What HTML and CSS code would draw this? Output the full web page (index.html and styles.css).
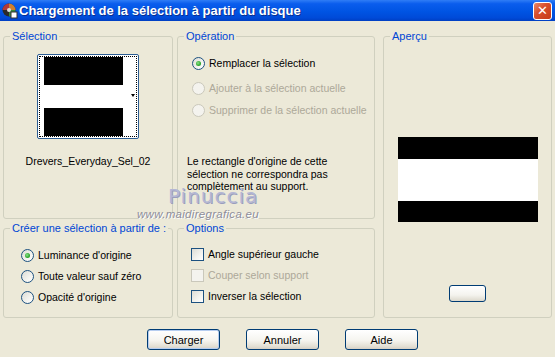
FILE: index.html
```html
<!DOCTYPE html>
<html lang="fr">
<head>
  <meta charset="UTF-8" />
  <title>Chargement de la sélection à partir du disque</title>
  <link rel="stylesheet" href="styles.css">
</head>
<body>
  <div class="window">
    <div class="titlebar">
      <svg class="app-icon" width="16" height="16" viewBox="0 0 16 16">
        <circle cx="7" cy="7" r="6.5" fill="#2a2a2a"/>
        <path d="M7 7 L7 0.5 A6.5 6.5 0 0 1 13.5 7 Z" fill="#d08030"/>
        <path d="M7 7 L13.5 7 A6.5 6.5 0 0 1 7 13.5 Z" fill="#3a8a3a"/>
        <path d="M7 7 L0.5 7 A6.5 6.5 0 0 1 7 0.5 Z" fill="#b03a3a"/>
        <circle cx="7" cy="7" r="2" fill="#ddd"/>
        <rect x="9" y="9" width="6" height="6" fill="#fff" stroke="#333"/>
      </svg>
      <span class="title">Chargement de la sélection à partir du disque</span>
      <button class="close-btn">&#x2715;</button>
    </div>

    <div class="dialog">
      <div class="panes">
        <fieldset class="group sel">
          <legend>Sélection</legend>
          <div class="picker">
            <div class="focus">
              <div class="sel-img">
                <div class="bar"></div>
                <div class="gap"></div>
                <div class="bar"></div>
              </div>
              <div class="drop"><span class="arrow"></span></div>
            </div>
          </div>
          <div class="filename">Drevers_Everyday_Sel_02</div>
        </fieldset>

        <fieldset class="group op">
          <legend>Opération</legend>
          <div class="opt r1"><span class="radio checked"></span>Remplacer la sélection</div>
          <div class="opt r2 disabled"><span class="radio"></span>Ajouter à la sélection actuelle</div>
          <div class="opt r3 disabled"><span class="radio"></span>Supprimer de la sélection actuelle</div>
          <p class="note">Le rectangle d'origine de cette sélection ne correspondra pas complètement au support.</p>
        </fieldset>

        <fieldset class="group preview">
          <legend>Aperçu</legend>
          <div class="preview-img">
            <div class="bar top"></div>
            <div class="gap"></div>
            <div class="bar bottom"></div>
          </div>
          <button class="small-btn"></button>
        </fieldset>

        <fieldset class="group src">
          <legend>Créer une sélection à partir de :</legend>
          <div class="opt"><span class="radio checked"></span>Luminance d'origine</div>
          <div class="opt"><span class="radio"></span>Toute valeur sauf zéro</div>
          <div class="opt"><span class="radio"></span>Opacité d'origine</div>
        </fieldset>

        <fieldset class="group opts">
          <legend>Options</legend>
          <div class="opt"><span class="check"></span>Angle supérieur gauche</div>
          <div class="opt disabled"><span class="check"></span>Couper selon support</div>
          <div class="opt"><span class="check"></span>Inverser la sélection</div>
        </fieldset>
      </div>

      <div class="buttons">
        <button class="btn default">Charger</button>
        <button class="btn">Annuler</button>
        <button class="btn">Aide</button>
      </div>

      <div class="watermark">
        <div class="wm-name">Pinuccia</div>
        <div class="wm-url">www.maidiregrafica.eu</div>
      </div>
    </div>
  </div>
</body>
</html>
```

FILE: styles.css
```css
:root {
  --dialog-bg: #ece9d8;
  --group-border: #d0d0bf;
  --legend: #0046d5;
  --disabled: #aca899;
  --control-border: #1c5180;
}

body {
  margin: 0;
  width: 555px;
  height: 357px;
  overflow: hidden;
  background-color: var(--dialog-bg);
  font-family: 'Liberation Sans', Arial, sans-serif;
  font-size: 10.5px;
  color: #000;
}

.window {
  height: 357px;
  display: flex;
  flex-direction: column;
}

.titlebar {
  height: 21px;
  display: flex;
  align-items: center;
  padding: 0 3px 0 2px;
  background: linear-gradient(#2f7df6 0%, #0a5ded 18%, #0054e3 55%, #004ad8 85%, #003fc2 100%);
  color: #fff;
}

.app-icon {
  flex: none;
  margin-right: 1px;
}

.title {
  flex: 1;
  font-weight: bold;
  font-size: 13px;
  text-shadow: 1px 1px 0 #0a2e90;
  white-space: nowrap;
}

.close-btn {
  width: 19px;
  height: 18px;
  padding: 0;
  border: 1px solid #fff;
  border-radius: 3px;
  background: linear-gradient(135deg, #e88a6a 0%, #d9502e 40%, #c63a14 100%);
  color: #fff;
  font-size: 13px;
  font-weight: bold;
  line-height: 16px;
  font-family: 'DejaVu Sans', sans-serif;
}

.dialog {
  position: relative;
  flex: 1;
  padding: 9px 3px 0 3px;
}

.panes {
  display: grid;
  grid-template-columns: 170px 198px 173px;
  grid-template-rows: 189px 96px;
  column-gap: 4px;
  row-gap: 3px;
}

.group {
  margin: 0;
  padding: 0;
  min-width: 0;
  border: 1px solid var(--group-border);
  border-radius: 3px;
}

.group legend {
  margin-left: 6px;
  padding: 0 2px;
  color: var(--legend);
  font-size: 11px;
  line-height: 13px;
  white-space: nowrap;
}

.preview {
  grid-column: 3;
  grid-row: 1 / span 2;
  margin-left: 4px;
  display: flex;
  flex-direction: column;
  align-items: center;
}

.src { grid-column: 1; grid-row: 2; }
.opts { grid-column: 2; grid-row: 2; }

/* selection picker */
.picker {
  width: 98px;
  margin: 11px auto 0;
  padding: 1px;
  border: 1px solid #2c5d92;
  border-radius: 2px;
  background: #fff;
}

.focus {
  display: flex;
  border: 1px dotted #000;
  padding-left: 4px;
}

.sel-img {
  width: 79px;
}

.sel-img .bar { height: 28px; background: #000; }
.sel-img .gap { height: 23px; background: #fff; }

.drop {
  flex: 1;
  display: flex;
  align-items: center;
  justify-content: flex-end;
  padding-right: 1px;
}

.arrow {
  width: 0;
  height: 0;
  margin-bottom: 2px;
  border-left: 2.5px solid transparent;
  border-right: 2.5px solid transparent;
  border-top: 3px solid #000;
}

.filename {
  margin-top: 16px;
  text-align: center;
  line-height: 13px;
}

/* radios and checkboxes */
.opt {
  display: flex;
  align-items: center;
  height: 13px;
  line-height: 13px;
  white-space: nowrap;
}

.src .opt { margin-left: 17px; }
.src .opt:first-of-type { margin-top: 14px; }
.opts .opt { margin-left: 13px; }
.opts .opt:first-of-type { margin-top: 13px; }
.src .opt + .opt,
.opts .opt + .opt { margin-top: 8px; }

.op .opt { margin-left: 14px; }
.op .r1 { margin-top: 14px; }
.op .r2 { margin-top: 12px; }
.op .r3 { margin-top: 9px; }

.opt.disabled { color: var(--disabled); }

.radio {
  position: relative;
  flex: none;
  width: 11px;
  height: 11px;
  margin-right: 4px;
  border: 1px solid var(--control-border);
  border-radius: 50%;
  background: linear-gradient(135deg, #dcdcd5 0%, #f3f3ef 60%, #fff 100%);
}

.radio.checked::after {
  content: '';
  position: absolute;
  left: 3px;
  top: 3px;
  width: 5px;
  height: 5px;
  border-radius: 50%;
  background: radial-gradient(circle at 40% 40%, #8be08b 0%, #2ea82e 60%, #1d861d 100%);
}

.check {
  flex: none;
  width: 11px;
  height: 11px;
  margin-right: 4px;
  border: 1px solid var(--control-border);
  background: linear-gradient(135deg, #dcdcd5 0%, #f3f3ef 60%, #fff 100%);
}

.opt.disabled .radio,
.opt.disabled .check {
  border-color: #cac8bb;
  background: #f4f3ee;
}

.note {
  margin: 38px 0 0 9px;
  line-height: 12.5px;
  width: 160px;
}

/* preview */
.preview-img {
  width: 140px;
  margin-top: 94px;
}

.preview-img .bar.top { height: 22px; background: #000; }
.preview-img .gap { height: 42px; background: #fff; }
.preview-img .bar.bottom { height: 21px; background: #000; }

.small-btn {
  width: 37px;
  height: 17px;
  margin-top: 63px;
  padding: 0;
  border: 1px solid #003c74;
  border-radius: 3px;
  background: linear-gradient(#fff 0%, #f4f3ee 60%, #dcd8cc 100%);
}

/* buttons */
.buttons {
  display: flex;
  gap: 26px;
  margin: 11px 0 0 144px;
}

.btn {
  width: 73px;
  height: 21px;
  padding: 0;
  border: 1px solid #003c74;
  border-radius: 3px;
  background: linear-gradient(#fff 0%, #f5f4ef 55%, #e3e0d5 85%, #d6d0c5 100%);
  font-family: 'Liberation Sans', Arial, sans-serif;
  font-size: 11px;
  color: #000;
}

.btn.default {
  box-shadow: inset 0 0 0 1px #b6cdf0;
}

/* watermark over the dialog */
.watermark {
  position: absolute;
  left: 134px;
  top: 164px;
  pointer-events: none;
}

.wm-name {
  margin-left: 34px;
  font-family: 'DejaVu Sans', sans-serif;
  font-size: 20px;
  letter-spacing: 1px;
  line-height: 23px;
  color: #b4b7d4;
  text-shadow: 1px 1px 0 #9a9dbd;
}

.wm-url {
  margin-left: 3px;
  font-family: 'Liberation Sans', Arial, sans-serif;
  font-style: italic;
  font-size: 11.5px;
  letter-spacing: 0.3px;
  line-height: 13px;
  color: #8d8d9a;
  text-shadow: 1px 1px 0 #fff;
}
```
